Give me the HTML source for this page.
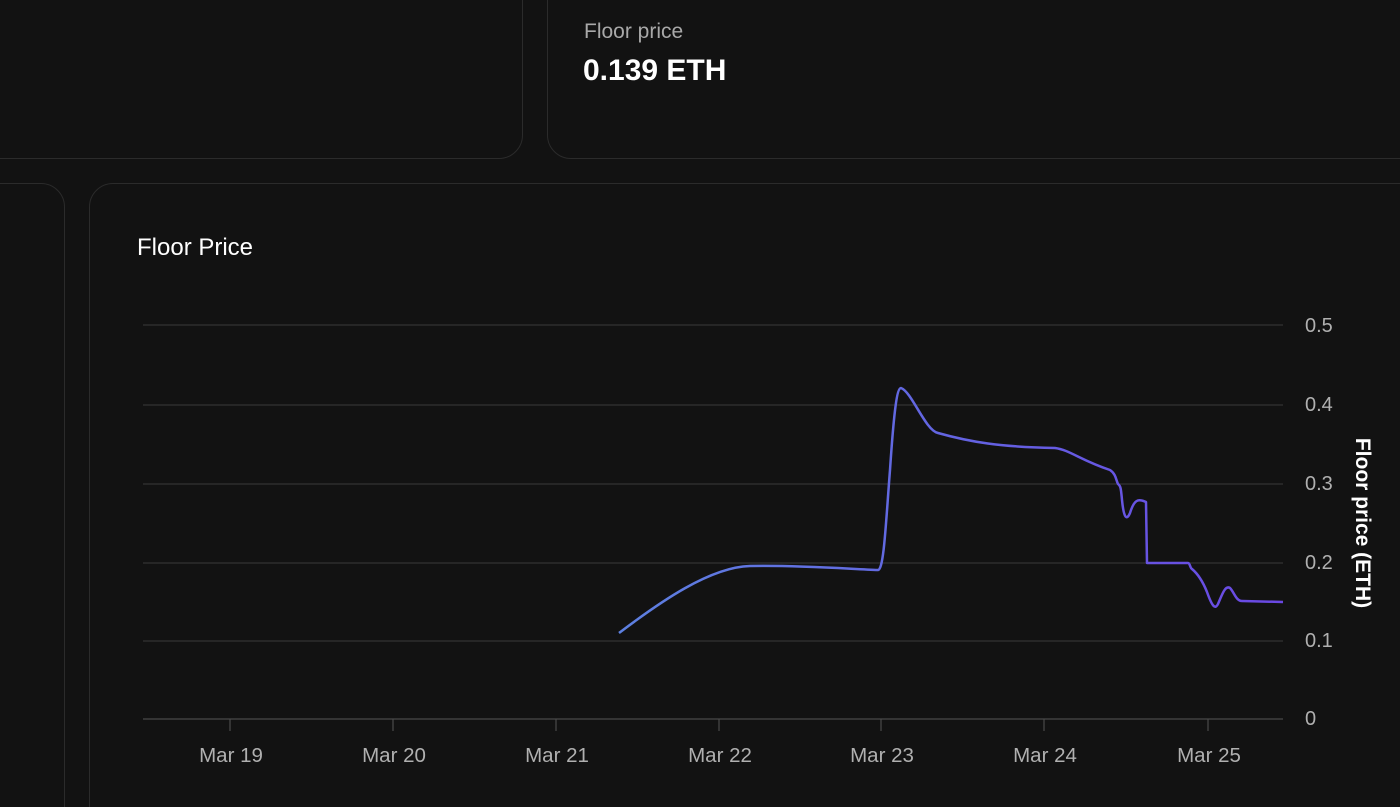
<!DOCTYPE html>
<html><head><style>
html,body{margin:0;padding:0;background:#121212;width:1400px;height:807px;overflow:hidden;font-family:"Liberation Sans",sans-serif}
#w{position:relative;width:1400px;height:807px;overflow:hidden}
.card{position:absolute;border:1px solid #2b2b2b;border-radius:24px;background:#121212}
</style></head><body><div id="w">
<div class="card" style="left:-40px;top:-40px;width:561px;height:197px"></div>
<div class="card" style="left:547px;top:-40px;width:900px;height:197px"></div>
<div class="card" style="left:-40px;top:183px;width:103px;height:660px"></div>
<div class="card" style="left:89px;top:183px;width:1400px;height:660px"></div>
<div style="position:absolute;left:584px;top:20px;color:#a8a8a8;font-size:21px">Floor price</div>
<div style="position:absolute;left:583px;top:54px;color:#fff;font-size:30px;font-weight:bold">0.139 ETH</div>
<div style="position:absolute;left:137px;top:234px;color:#fff;font-size:24px">Floor Price</div>
<svg style="position:absolute;left:0;top:0" width="1400" height="807">
<defs><linearGradient id="g" x1="619" x2="1283" y1="0" y2="0" gradientUnits="userSpaceOnUse"><stop offset="0" stop-color="#5d80e0"/><stop offset="1" stop-color="#6a48e3"/></linearGradient></defs>
<g stroke="#333" stroke-width="1.2">
<line x1="143" x2="1283" y1="325" y2="325"/><line x1="143" x2="1283" y1="405" y2="405"/><line x1="143" x2="1283" y1="484" y2="484"/><line x1="143" x2="1283" y1="563" y2="563"/><line x1="143" x2="1283" y1="641" y2="641"/></g>
<g stroke="#4a4a4a" stroke-width="1.2"><line x1="143" x2="1283" y1="719" y2="719"/>
<line x1="230" x2="230" y1="719" y2="731"/><line x1="393" x2="393" y1="719" y2="731"/><line x1="556" x2="556" y1="719" y2="731"/><line x1="719" x2="719" y1="719" y2="731"/><line x1="881" x2="881" y1="719" y2="731"/><line x1="1044" x2="1044" y1="719" y2="731"/><line x1="1208" x2="1208" y1="719" y2="731"/></g>
<g fill="#b0b0b0" font-size="20.5" font-family="Liberation Sans,sans-serif" text-anchor="middle">
<text x="231" y="762">Mar 19</text><text x="394" y="762">Mar 20</text><text x="557" y="762">Mar 21</text><text x="720" y="762">Mar 22</text><text x="882" y="762">Mar 23</text><text x="1045" y="762">Mar 24</text><text x="1209" y="762">Mar 25</text></g>
<g fill="#b0b0b0" font-size="20" font-family="Liberation Sans,sans-serif">
<text x="1305" y="332">0.5</text><text x="1305" y="411">0.4</text><text x="1305" y="490">0.3</text><text x="1305" y="569">0.2</text><text x="1305" y="647">0.1</text><text x="1305" y="725">0</text></g>
<text transform="translate(1356,523) rotate(90)" fill="#fff" font-size="21" font-weight="bold" text-anchor="middle" font-family="Liberation Sans,sans-serif">Floor price (ETH)</text>
<path fill="none" stroke="url(#g)" stroke-width="2.5" stroke-linejoin="round" d="M619,633 C660,602 710,567 750,566 C800,565 850,569 878,570 C884,570 886,520 890,470 C894,410 897,388 901,388 C912,392 925,430 938,433 C970,442 1000,447 1055,448 C1070,450 1080,460 1110,470 C1116,474 1116,480 1118,484 C1121,486 1121,490 1122,500 C1124,520 1127,520 1130,513 C1134,500 1138,498 1146,502 L1147,563 L1188,563 C1190,563 1190,568 1192,569 C1198,574 1203,582 1207,592 C1212,606 1215,610 1218,604 C1222,595 1225,585 1230,588 C1234,592 1236,601 1242,601 L1283,602"/>
</svg>
</div></body></html>
